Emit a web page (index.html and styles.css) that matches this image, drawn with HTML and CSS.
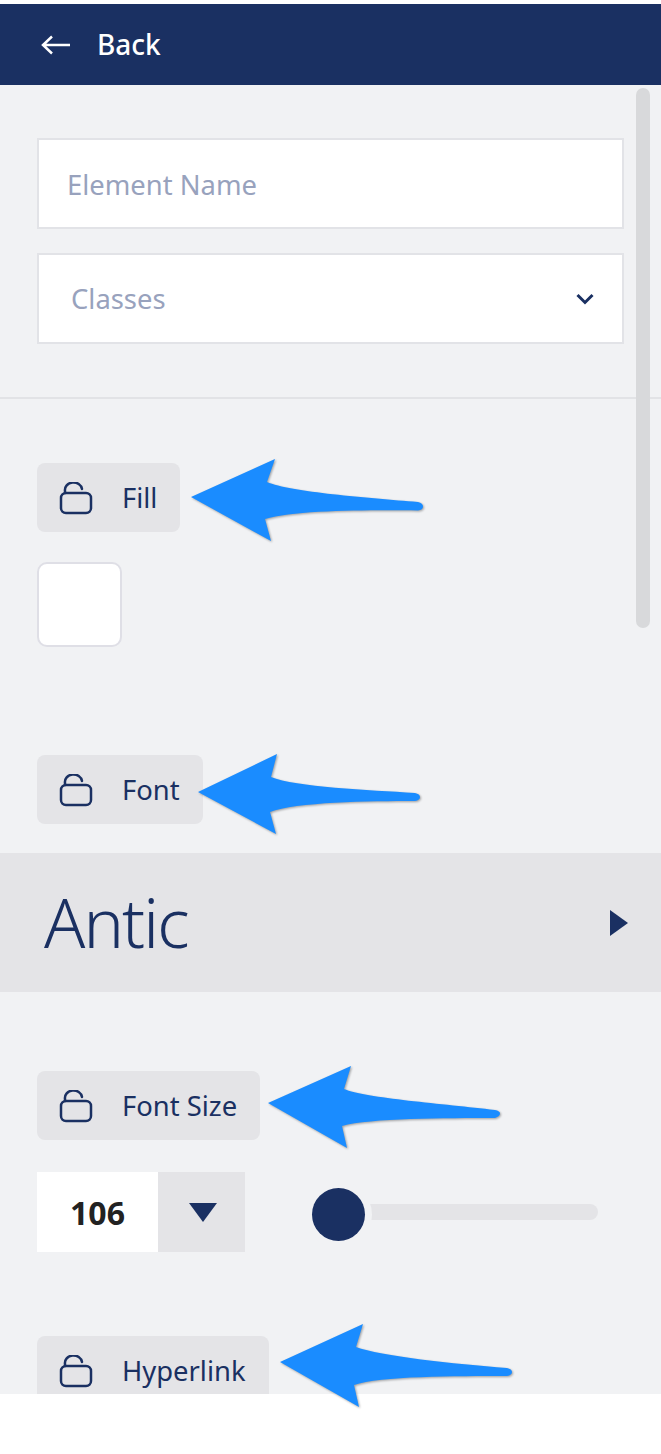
FILE: index.html
```html
<!DOCTYPE html>
<html lang="en">
<head>
<meta charset="utf-8">
<title>Element settings</title>
<link rel="stylesheet" href="styles.css">
</head>
<body>
<div class="page">
  <header class="topbar">
    <svg class="back-icon" width="30" height="20" viewBox="0 0 30 20"><path d="M29 10H2M11 1.500 2 10l9 8.500"/></svg>
    <span class="back-label">Back</span>
  </header>
  <main class="panel">
    <div class="scroll-thumb"></div>
    <section class="form">
      <div class="field field-name"><span class="placeholder">Element Name</span></div>
      <div class="field field-select">
        <span class="placeholder">Classes</span>
        <svg class="chevron" width="18" height="12" viewBox="0 0 18 12"><path d="M1.500 2 9 9.500 16.500 2"/></svg>
      </div>
    </section>
    <section class="group group-fill">
      <div class="chip">
        <svg class="lock" width="34" height="33" viewBox="0 0 34 33"><rect x="2" y="11" width="30" height="20" rx="5"/><path d="M6 11V9a8.500 7.500 0 0 1 17-2"/></svg>
        <span>Fill</span>
      </div>
      <div class="swatch"></div>
    </section>
    <section class="group group-font">
      <div class="chip">
        <svg class="lock" width="34" height="33" viewBox="0 0 34 33"><rect x="2" y="11" width="30" height="20" rx="5"/><path d="M6 11V9a8.500 7.500 0 0 1 17-2"/></svg>
        <span>Font</span>
      </div>
    </section>
    <div class="font-band">
      <span class="font-name">Antic</span>
      <svg class="band-arrow" width="20" height="28" viewBox="0 0 20 28"><path d="M1 1 19 14 1 27z"/></svg>
    </div>
    <section class="group group-size">
      <div class="chip">
        <svg class="lock" width="34" height="33" viewBox="0 0 34 33"><rect x="2" y="11" width="30" height="20" rx="5"/><path d="M6 11V9a8.500 7.500 0 0 1 17-2"/></svg>
        <span>Font Size</span>
      </div>
      <div class="size-row">
        <div class="stepper">
          <div class="stepper-value">106</div>
          <div class="stepper-btn"><svg width="28" height="20" viewBox="0 0 28 20"><path d="M0 1H28L14 20z"/></svg></div>
        </div>
        <div class="slider"><div class="slider-thumb"></div></div>
      </div>
    </section>
    <section class="group group-link">
      <div class="chip">
        <svg class="lock" width="34" height="33" viewBox="0 0 34 33"><rect x="2" y="11" width="30" height="20" rx="5"/><path d="M6 11V9a8.500 7.500 0 0 1 17-2"/></svg>
        <span>Hyperlink</span>
      </div>
    </section>
  </main>
  <svg class="callouts" width="661" height="1454" viewBox="0 0 661 1454">
    <path d="M191 497 275 459 267 482C290 492 370 498 418 502Q423 503 423 506.500T418 510.500C370 510 295 510 265 519L271 541z"/>
    <path d="M198 792 277 754 271 777C295 787 370 790 415 793Q420 794 420 797T415 801C370 801 295 802 270 812L276 834z"/>
    <path d="M268 1103 351 1066 344 1089C365 1098 445 1104 495 1110Q500 1111 500 1113.500T495 1118C445 1118 370 1118 342 1126L347 1148z"/>
    <path d="M280 1362 363 1324 356 1347C380 1356 455 1364 507 1368Q512 1369 512 1372T507 1376C455 1376 380 1376 354 1385L359 1407z"/>
  </svg>
</div>
</body>
</html>
```
FILE: styles.css
```css
* { box-sizing: border-box; }
html, body { margin: 0; padding: 0; background: #fff; }
body { font-family: "Noto Sans", "Open Sans", sans-serif; color: #1a3062; }
.page { position: relative; width: 661px; height: 1454px; padding-top: 4px; overflow: hidden; }

.topbar { height: 81px; background: #1a3062; color: #fff; display: flex; align-items: center; padding-left: 41px; gap: 26px; }
.back-icon { fill: none; stroke: #fff; stroke-width: 2.500; margin-top: 1px; }
.back-label { font-size: 28px; font-weight: 500; margin-top: -1px; }

.panel { position: relative; height: 1309px; background: #f1f2f4; overflow: hidden; }
.scroll-thumb { position: absolute; left: 636px; top: 3px; width: 14px; height: 540px; border-radius: 7px; background: #d8d9db; }

.form { padding: 53px 37px; border-bottom: 2px solid #e2e3e6; height: 314px; display: flex; flex-direction: column; gap: 24px; }
.field { height: 91px; background: #fff; border: 2px solid #e2e3e7; display: flex; align-items: center; justify-content: space-between; padding: 0 28px; font-size: 27.400px; }
.field-name { padding-top: 2px; }
.field-select { padding-left: 32px; }
.placeholder { color: #98a2bd; }
.chevron { fill: none; stroke: #1a3062; stroke-width: 3; }

.chip { display: inline-flex; align-items: center; height: 69px; padding: 0 23px 0 22px; gap: 29px; background: #e4e4e7; border-radius: 8px; font-size: 27.400px; vertical-align: top; }
.lock { fill: none; stroke: #1a3062; stroke-width: 2.500; stroke-linecap: round; flex: none; margin-top: 2px; }

.group { padding: 0 37px; display: block; }
.group-fill { margin-top: 64px; }
.group-font { margin-top: 108px; height: 69px; }
.group-size { margin-top: 79px; }
.group-link { margin-top: 84px; }

.swatch { width: 85px; height: 85px; margin-top: 30px; background: #fff; border: 2px solid #dfdfe6; border-radius: 10px; }

.font-band { height: 139px; margin-top: 29px; background: #e4e4e7; display: flex; align-items: center; justify-content: space-between; padding: 0 32px 0 44px; }
.font-name { font-size: 68px; font-weight: 300; letter-spacing: -1.900px; margin-top: -3px; }
.band-arrow { fill: #1a3062; }

.size-row { display: flex; align-items: center; margin-top: 32px; height: 80px; }
.stepper { display: flex; height: 80px; }
.stepper-value { width: 121px; background: #fff; color: #222; font-size: 32px; font-weight: 700; display: flex; align-items: center; justify-content: center; }
.stepper-btn { width: 87px; background: #e4e4e7; display: flex; align-items: center; justify-content: center; padding-left: 3px; }
.stepper-btn path { fill: #1a3062; }

.slider { position: relative; margin-left: 65px; width: 288px; height: 16px; background: #e4e4e7; border-radius: 8px; }
.slider-thumb { position: absolute; left: 2px; top: -16px; width: 53px; height: 53px; border-radius: 50%; background: #1a3062; box-shadow: 0 0 0 7px #f1f2f4; }

.callouts { position: absolute; left: 0; top: 0; pointer-events: none; }
.callouts path { fill: #1a8cff; filter: drop-shadow(1px 1px 1px rgba(0, 0, 0, .35)); }
```
